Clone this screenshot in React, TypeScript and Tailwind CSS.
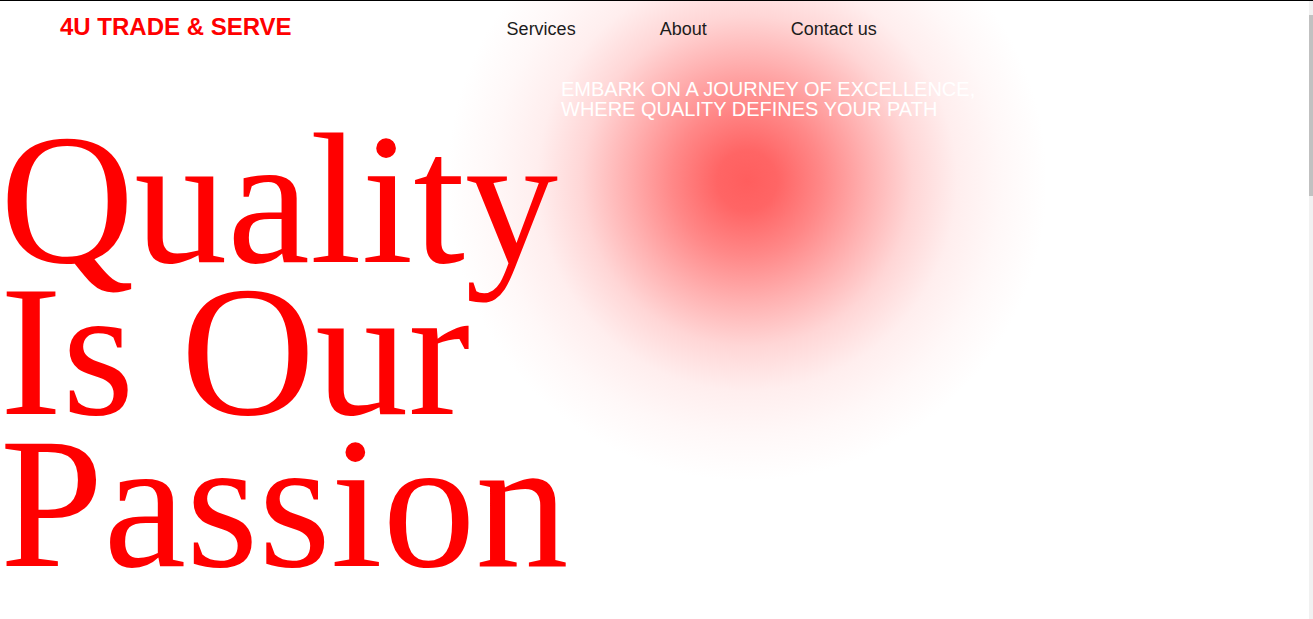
const sans = "font-['Liberation_Sans',Arial,sans-serif]";

const links = ["Services", "About", "Contact us"];

export default function App() {
  return (
    <div className={`flex h-screen overflow-hidden border-t border-black bg-white ${sans}`}>
      <div className="relative min-w-0 flex-1 overflow-hidden">
        {/* glow behind the hero */}
        <div className="absolute left-[447px] top-[-120px] h-[600px] w-[600px] bg-[radial-gradient(circle_closest-side,#ff5e5e_0%,#ff6565_10%,#ff8888_25%,#ffb0b0_40%,#ffd6d6_55%,#ffeeee_70%,#fff8f8_85%,rgba(255,255,255,0)_100%)]" />

        <div className="relative">
          <header className="flex items-baseline pl-[60px] pt-[14px]">
            <a href="#" className="text-[24px] font-bold leading-none text-[#ff0000]">
              4U TRADE &amp; SERVE
            </a>
            <nav className="ml-[215px] flex items-baseline gap-[84px]">
              {links.map((l) => (
                <a key={l} href="#" className="text-[18px] leading-none text-[#1c1c1c]">
                  {l}
                </a>
              ))}
            </nav>
          </header>

          <p className="ml-[561px] mt-[40px] text-[20px] leading-[20px] text-white">
            EMBARK ON A JOURNEY OF EXCELLENCE,
            <br />
            WHERE QUALITY DEFINES YOUR PATH
          </p>

          <h1 className="mt-[4px] font-['Liberation_Serif','Times_New_Roman',serif] text-[186px] font-normal leading-[152px] text-[#ff0000]">
            <span className="block">Quality</span>
            <span className="block">Is Our</span>
            <span className="block">Passion</span>
          </h1>
        </div>
      </div>

      {/* page scrollbar */}
      <div className="w-[4px] shrink-0 bg-[#f1f1f1] pt-[14px]">
        <div className="h-[181px] bg-[#c1c1c1]" />
      </div>
    </div>
  );
}
